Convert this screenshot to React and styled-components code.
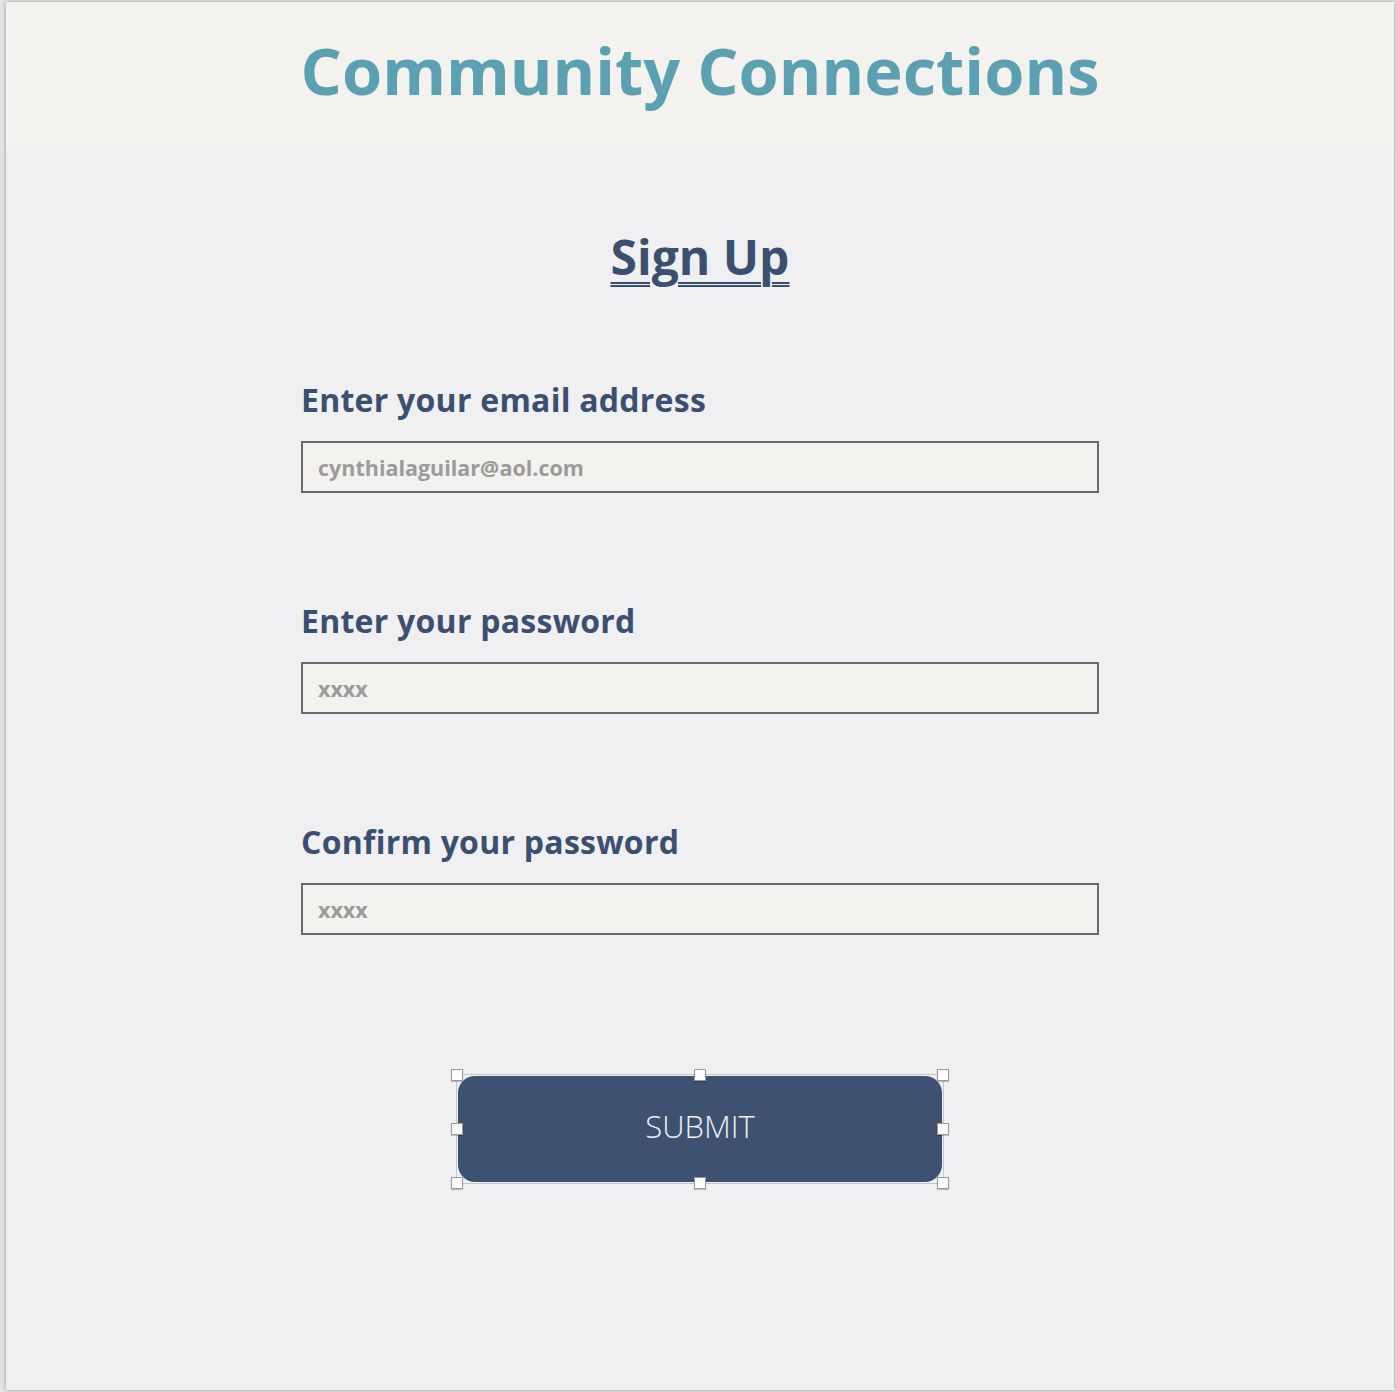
import React from "react";
import styled, { createGlobalStyle } from "styled-components";

const GlobalStyle = createGlobalStyle`
  html, body {
    margin: 0;
    padding: 0;
  }
  body {
    background: #e4e4e4;
    font-family: "Open Sans", "Noto Sans", sans-serif;
  }
`;

const Canvas = styled.div`
  padding: 2px 3px 2px 6px;
`;

const Artboard = styled.div`
  width: 1388px;
  height: 1388px;
  background: #f0eff2;
  box-shadow: 0 0 4px rgba(0, 0, 0, 0.35);
  display: flex;
  flex-direction: column;
`;

const Header = styled.header`
  height: 148px;
  background: #f3f2ef;
  display: flex;
  justify-content: center;
`;

const Title = styled.h1`
  margin: 0;
  padding-top: 23px;
  font-size: 65px;
  line-height: 90px;
  font-weight: 700;
  color: #5ba1b1;
`;

const Main = styled.main`
  display: flex;
  flex-direction: column;
  align-items: center;
`;

const Heading = styled.h2`
  margin: 0;
  margin-top: 75px;
  font-size: 48px;
  line-height: 64px;
  font-weight: 700;
  color: #3b4f70;
  text-decoration: underline double;
  text-decoration-thickness: 2px;
  text-underline-offset: 7px;
`;

const Form = styled.form`
  width: 798px;
  margin-top: 91px;
  display: flex;
  flex-direction: column;
  gap: 108px;
`;

const Field = styled.div`
  display: flex;
  flex-direction: column;
  gap: 21px;
`;

const Label = styled.label`
  font-size: 32px;
  line-height: 40px;
  font-weight: 700;
  letter-spacing: 0.25px;
  color: #3b4f70;
`;

const Input = styled.input`
  box-sizing: border-box;
  width: 100%;
  height: 52px;
  margin: 0;
  padding: 0 15px;
  border: 2px solid #6a6a6d;
  background: #f3f2ef;
  font-family: "Open Sans", "Noto Sans", sans-serif;
  font-size: 21.5px;
  font-weight: 700;
  color: #3b4f70;
  outline: none;

  &::placeholder {
    color: #9b9b9b;
  }
`;

const Selection = styled.div`
  position: relative;
  margin-top: 139px;
  padding: 1px;
  border: 1px solid #c6c5ca;
`;

const Handle = styled.span`
  position: absolute;
  width: 12px;
  height: 12px;
  box-sizing: border-box;
  background: #ffffff;
  border: 1px solid #9a9a9a;
  box-shadow: 0 1px 1px rgba(0, 0, 0, 0.2);
  left: ${(p) => p.$x};
  top: ${(p) => p.$y};
  transform: translate(-50%, -50%);
`;

const SubmitButton = styled.button`
  display: block;
  width: 484px;
  height: 106px;
  padding: 0 0 6px;
  border: none;
  border-radius: 17px;
  background: #3d5170;
  color: #f0f0f3;
  font-family: "Open Sans", "Noto Sans", sans-serif;
  font-size: 31px;
  font-weight: 300;
  cursor: pointer;
`;

const fields = [
  { id: "email", label: "Enter your email address", type: "email", placeholder: "cynthialaguilar@aol.com" },
  { id: "password", label: "Enter your password", type: "text", placeholder: "xxxx" },
  { id: "confirm", label: "Confirm your password", type: "text", placeholder: "xxxx" },
];

const handles = [
  ["0%", "0%"], ["50%", "0%"], ["100%", "0%"],
  ["0%", "50%"], ["100%", "50%"],
  ["0%", "100%"], ["50%", "100%"], ["100%", "100%"],
];

const App = () => {
  return (
    <>
      <GlobalStyle />
      <Canvas>
        <Artboard>
          <Header>
            <Title>Community Connections</Title>
          </Header>
          <Main>
            <Heading>Sign Up</Heading>
            <Form onSubmit={(e) => e.preventDefault()}>
              {fields.map((f) => (
                <Field key={f.id}>
                  <Label htmlFor={f.id}>{f.label}</Label>
                  <Input id={f.id} type={f.type} placeholder={f.placeholder} />
                </Field>
              ))}
            </Form>
            <Selection>
              <SubmitButton type="button">SUBMIT</SubmitButton>
              {handles.map(([x, y], i) => (
                <Handle key={i} $x={x} $y={y} />
              ))}
            </Selection>
          </Main>
        </Artboard>
      </Canvas>
    </>
  );
};

export default App;
